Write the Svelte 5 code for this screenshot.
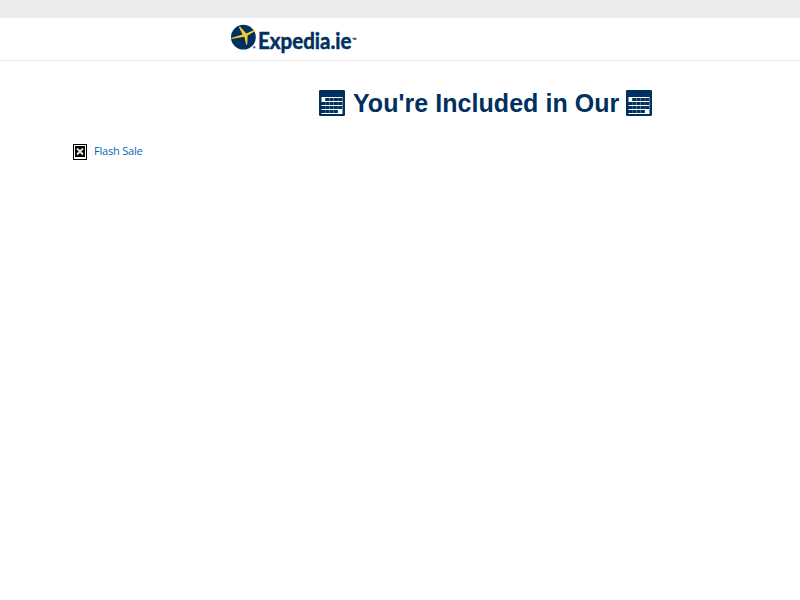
<script>
  const days = [];
  for (let row = 0; row < 4; row++) {
    for (let col = 0; col < 5; col++) {
      if ((row === 0 && col === 0) || (row === 3 && col === 4)) continue;
      days.push({ x: 1.9 + col * 4.3, y: 8 + row * 4 });
    }
  }
</script>

{#snippet calendar()}
  <svg class="calendar" width="26" height="26" viewBox="0 0 26 26" aria-hidden="true">
    <rect width="26" height="26" rx="1.2" fill="#00305f" />
    <path d="M2.5 7h21v17h-21z" fill="#fff" />
    {#each days as day}
      <rect x={day.x} y={day.y} width="4.1" height="3" fill="#00305f" />
    {/each}
  </svg>
{/snippet}

<div class="page">
  <div class="strip"></div>
  <header>
    <svg class="logo" width="126" height="34" viewBox="0 0 126 34" role="img" aria-label="Expedia.ie">
      <circle cx="13.4" cy="15.2" r="12.4" fill="#00305f" />
      <path d="M1.2 15.9 12.6 12.6 8.8 4.9 10 4.5 16.3 11.6 23.5 8.2Q25.8 7.7 25.4 9L17.6 13.4 17.3 22 16.2 23 14.4 14.8 1.4 17Z" fill="#fdc82f" />
      <circle cx="24.2" cy="25.3" r="1.2" fill="#6a6f96" />
      <text x="28" y="26.8" textLength="93.5" lengthAdjust="spacingAndGlyphs" class="brand">Expedia.ie</text>
      <text x="122" y="18.8" class="tm">™</text>
    </svg>
  </header>
  <h1>{@render calendar()}<span>You're Included in Our</span>{@render calendar()}</h1>
  <a class="sale" href="#sale">
    <svg width="14" height="16" viewBox="0 0 14 16" aria-hidden="true">
      <rect x=".5" y=".5" width="13" height="15" fill="#fff" stroke="#000" />
      <rect x="2" y="2" width="10" height="11" fill="#000" />
      <path d="m4 4.5 6 6m0-6-6 6" stroke="#e8e8e8" stroke-width="1.8" />
    </svg>
    <span>Flash Sale</span>
  </a>
</div>

<style>
  :global(body) { margin: 0; background: #fff; }
  .page { height: 600px; overflow: hidden; background: #fff; font-family: "Liberation Sans", Arial, sans-serif; }
  .strip { height: 18px; background: #ececec; }
  header { box-sizing: border-box; height: 43px; padding: 4px 0 0 230px; border-bottom: 1px solid #ebebeb; }
  .logo { display: block; overflow: visible; }
  .brand { font: 700 22px Lato, sans-serif; fill: #00305f; stroke: #00305f; stroke-width: .5px; }
  .tm { font: 4.5px "Liberation Sans", sans-serif; fill: #00305f; stroke: #00305f; stroke-width: .2px; }
  h1 { display: flex; align-items: center; height: 30px; margin: 27px 0 0 319px; color: #00305f; font-size: 25px; line-height: 30px; white-space: nowrap; }
  h1 span { width: 266px; margin: 0 7px 0 8px; letter-spacing: .05px; }
  .calendar { flex: none; margin-top: -1px; }
  .sale { display: flex; align-items: center; width: max-content; height: 16px; margin: 26px 0 0 73px; gap: 7px; color: #0066b8; font: 11px/16px "Open Sans", sans-serif; letter-spacing: -.2px; text-decoration: none; }
  .sale span { margin-top: -2px; }
</style>
